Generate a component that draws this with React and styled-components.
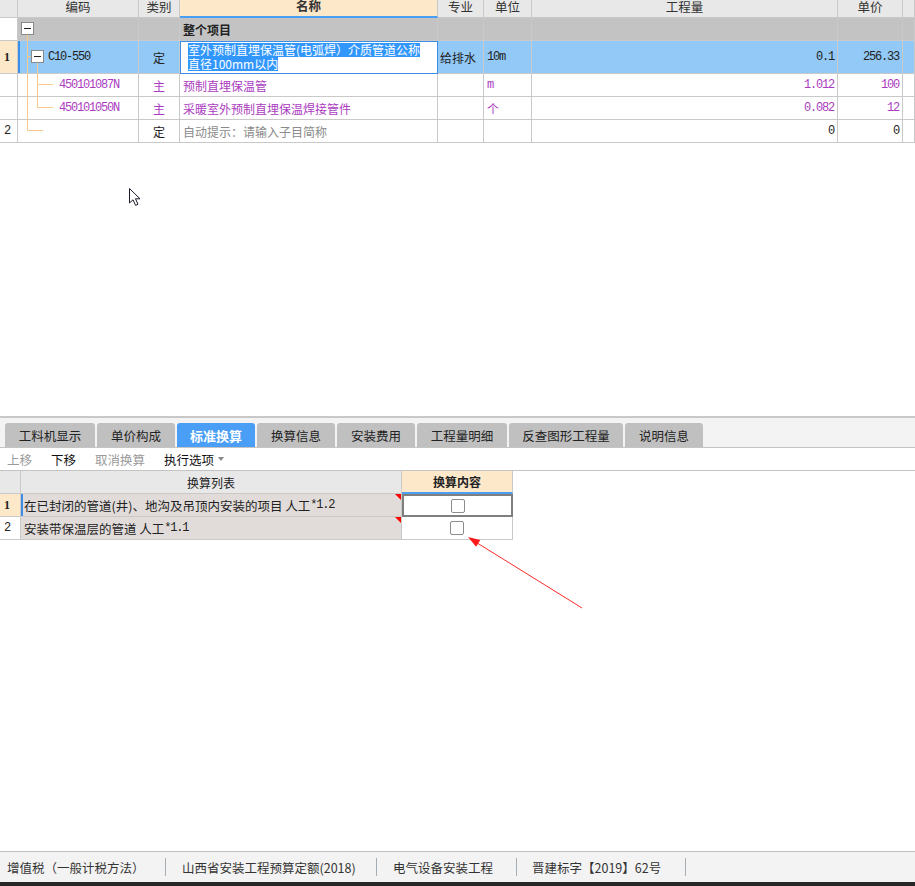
import React from "react";
import styled, { createGlobalStyle } from "styled-components";

const GlobalStyle = createGlobalStyle`
  html, body { margin: 0; padding: 0; background: #fff; }
  body {
    font-family: "Noto Sans CJK SC", "Noto Sans", sans-serif;
    font-size: 12px;
    color: #222;
    overflow: hidden;
  }
  * { box-sizing: border-box; }
`;

const LINE = "#c9c9c9";
const PEACH = "#fde8ca";
const SEL = "#92c9f7";
const GROUP = "#c3c3c3";
const HEAD = "#e8e8e8";
const PURPLE = "#ab3cc0";
const BLUE = "#3d8fe6";

const Page = styled.div`
  position: relative;
  width: 915px;
  height: 886px;
  display: flex;
  flex-direction: column;
  overflow: hidden;
`;

const TopPane = styled.div`
  position: relative;
  height: 416px;
  flex: none;
`;

const Row = styled.div`
  display: grid;
  grid-template-columns: ${(p) => p.$cols};
  height: ${(p) => p.$h}px;
`;

const Cell = styled.div`
  display: flex;
  align-items: center;
  justify-content: ${(p) =>
    p.$align === "right" ? "flex-end" : p.$align === "center" ? "center" : "flex-start"};
  padding: 0 ${(p) => p.$pr ?? 3}px 0 ${(p) => p.$pl ?? 3}px;
  border-right: 1px solid ${LINE};
  border-bottom: 1px solid ${LINE};
  background: ${(p) => p.$bg || "#fff"};
  color: ${(p) => p.$color || "#222"};
  font-weight: ${(p) => (p.$bold ? 700 : 400)};
  box-shadow: ${(p) => (p.$mark ? `inset 2px 0 0 ${BLUE}` : "none")};
  white-space: nowrap;
  overflow: hidden;
  position: relative;
`;

const HeadCell = styled(Cell)`
  justify-content: center;
  align-items: flex-end;
  padding-bottom: 4px;
  line-height: 12px;
  font-size: 12.5px;
  color: #333;
  background: ${(p) => (p.$active ? PEACH : HEAD)};
  border-bottom: ${(p) => (p.$active ? `2px solid #4a9ff5` : `1px solid ${LINE}`)};
`;

const NumCell = styled(Cell)`
  font-family: "Liberation Serif", serif;
  font-size: 12px;
  padding-left: 4px;
  background: ${(p) => (p.$current ? PEACH : "#fff")};
`;

const Mono = styled.span`
  font-family: "Liberation Mono", monospace;
  font-size: 12px;
  letter-spacing: -1.2px;
`;

const EditCell = styled.div`
  border: 1px solid ${BLUE};
  background: #fff;
  padding: 1px 0 0 7px;
  display: flex;
  flex-direction: column;
  align-items: flex-start;
  overflow: hidden;
`;

const Picked = styled.span`
  display: block;
  height: 14px;
  line-height: 14px;
  background: #3297fd;
  color: #fff;
  white-space: nowrap;
`;

const Overlay = styled.svg`
  position: absolute;
  left: ${(p) => p.$x}px;
  top: ${(p) => p.$y}px;
  pointer-events: none;
  overflow: visible;
`;

/* ---- bottom pane ---- */

const TabBar = styled.div`
  flex: none;
  height: 32px;
  border-top: 2px solid #c8c8c8;
  border-bottom: 1px solid #c4c4c4;
  background: #f3f3f3;
  display: flex;
  align-items: flex-end;
  gap: 2px;
  padding-left: 5px;
`;

const Tab = styled.div`
  width: ${(p) => p.$w}px;
  height: 24px;
  display: flex;
  align-items: center;
  justify-content: center;
  border-radius: 3px 3px 0 0;
  background: ${(p) => (p.$active ? "#4a9ef6" : "#c0c0c0")};
  color: ${(p) => (p.$active ? "#fff" : "#222")};
  font-size: ${(p) => (p.$active ? 13 : 12.5)}px;
  font-weight: ${(p) => (p.$active ? 700 : 400)};
`;

const Toolbar = styled.div`
  flex: none;
  height: 23px;
  border-bottom: 1px solid #c4c4c4;
  display: flex;
  align-items: center;
  gap: 19px;
  padding-left: 7px;
  font-size: 12.5px;
`;

const ToolItem = styled.span`
  color: ${(p) => (p.$off ? "#9a9a9a" : "#111")};
  display: inline-flex;
  align-items: center;
`;

const Caret = styled.span`
  width: 0;
  height: 0;
  margin-left: 4px;
  border-left: 3.5px solid transparent;
  border-right: 3.5px solid transparent;
  border-top: 4px solid #888;
`;

const ListCell = styled(Cell)`
  background: #e1dcd9;
  padding-left: 3px;
  font-size: 12.5px;
  &::after {
    content: "";
    position: absolute;
    top: 0;
    right: 0;
    border-top: 6px solid #f00;
    border-left: 6px solid transparent;
  }
`;

const CheckCell = styled(Cell)`
  justify-content: center;
  border: ${(p) => (p.$focus ? "2px solid #7f7f7f" : undefined)};
`;

const Check = styled.span`
  width: 14px;
  height: 14px;
  border: 1px solid #8c8c8c;
  border-radius: 2px;
  background: #fff;
`;

const Spacer = styled.div`
  flex: 1;
`;

const StatusBar = styled.div`
  flex: none;
  height: 35px;
  border-top: 1px solid #c0c0c0;
  border-bottom: 4px solid #272727;
  background: #f3f3f3;
  display: flex;
  align-items: center;
  font-size: 12.5px;
  color: #333;
`;

const StatusItem = styled.div`
  width: ${(p) => p.$w}px;
  padding-left: ${(p) => p.$pl}px;
  white-space: nowrap;
`;

const Sep = styled.span`
  width: 1px;
  height: 18px;
  background: #a4acb4;
`;

const TOP_COLS = "18px 121px 41px 258px 46px 48px 306px 65px 1fr";
const BOTTOM_COLS = "21px 381px 111px";

const children = [
  { code: "450101087N", name: "预制直埋保温管", unit: "m", qty: "1.012", price: "100" },
  { code: "450101050N", name: "采暖室外预制直埋保温焊接管件", unit: "个", qty: "0.082", price: "12", cjkUnit: true },
];

const tabs = [
  ["工料机显示", 90],
  ["单价构成", 78],
  ["标准换算", 78, true],
  ["换算信息", 78],
  ["安装费用", 78],
  ["工程量明细", 90],
  ["反查图形工程量", 114],
  ["说明信息", 78],
];

const TreeLines = () => (
  <Overlay $x={0} $y={0} width="140" height="142">
    <g stroke="#f8c98c" strokeWidth="1" fill="none">
      <line x1="27.5" y1="34" x2="27.5" y2="130.5" />
      <line x1="27" y1="130.5" x2="43" y2="130.5" />
      <line x1="27" y1="56.5" x2="31" y2="56.5" />
      <line x1="37.5" y1="63" x2="37.5" y2="107.5" />
      <line x1="37" y1="84.5" x2="53" y2="84.5" />
      <line x1="37" y1="107.5" x2="53" y2="107.5" />
    </g>
    <g stroke="#8a8a8a" fill="#fff">
      <rect x="21.5" y="22.5" width="12" height="12" />
      <rect x="31.5" y="50.5" width="12" height="12" />
    </g>
    <g stroke="#222" strokeWidth="1">
      <line x1="24" y1="28.5" x2="31" y2="28.5" />
      <line x1="34" y1="56.5" x2="41" y2="56.5" />
    </g>
  </Overlay>
);

const App = () => {
  return (
    <Page>
      <GlobalStyle />
      <TopPane>
        <Row $cols={TOP_COLS} $h={18}>
          <HeadCell />
          <HeadCell>编码</HeadCell>
          <HeadCell>类别</HeadCell>
          <HeadCell $active $bold>名称</HeadCell>
          <HeadCell>专业</HeadCell>
          <HeadCell>单位</HeadCell>
          <HeadCell>工程量</HeadCell>
          <HeadCell>单价</HeadCell>
          <HeadCell />
        </Row>

        <Row $cols={TOP_COLS} $h={23}>
          <NumCell />
          <Cell $bg={GROUP} />
          <Cell $bg={GROUP} />
          <Cell $bg={GROUP} $bold>整个项目</Cell>
          <Cell $bg={GROUP} />
          <Cell $bg={GROUP} />
          <Cell $bg={GROUP} />
          <Cell $bg={GROUP} />
          <Cell $bg={GROUP} />
        </Row>

        <Row $cols={TOP_COLS} $h={33}>
          <NumCell $current $bold>1</NumCell>
          <Cell $bg={SEL} $mark $pl={30}>
            <Mono>C10-550</Mono>
          </Cell>
          <Cell $bg={SEL} $align="center">定</Cell>
          <EditCell>
            <Picked>室外预制直埋保温管(电弧焊）介质管道公称</Picked>
            <Picked>直径100mm以内</Picked>
          </EditCell>
          <Cell $bg={SEL} $pl={2}>给排水</Cell>
          <Cell $bg={SEL}>
            <Mono>10m</Mono>
          </Cell>
          <Cell $bg={SEL} $align="right">
            <Mono>0.1</Mono>
          </Cell>
          <Cell $bg={SEL} $align="right">
            <Mono>256.33</Mono>
          </Cell>
          <Cell $bg={SEL} />
        </Row>

        {children.map((c) => (
          <Row key={c.code} $cols={TOP_COLS} $h={23}>
            <NumCell />
            <Cell $pl={41} $color={PURPLE}>
              <Mono>{c.code}</Mono>
            </Cell>
            <Cell $align="center" $color={PURPLE}>主</Cell>
            <Cell $color={PURPLE}>{c.name}</Cell>
            <Cell />
            <Cell $color={PURPLE}>{c.cjkUnit ? c.unit : <Mono>{c.unit}</Mono>}</Cell>
            <Cell $align="right" $color={PURPLE}>
              <Mono>{c.qty}</Mono>
            </Cell>
            <Cell $align="right" $color={PURPLE}>
              <Mono>{c.price}</Mono>
            </Cell>
            <Cell />
          </Row>
        ))}

        <Row $cols={TOP_COLS} $h={23}>
          <NumCell>
            <Mono>2</Mono>
          </NumCell>
          <Cell />
          <Cell $align="center">定</Cell>
          <Cell $color="#8a8a8a">自动提示：请输入子目简称</Cell>
          <Cell />
          <Cell />
          <Cell $align="right">
            <Mono>0</Mono>
          </Cell>
          <Cell $align="right">
            <Mono>0</Mono>
          </Cell>
          <Cell />
        </Row>

        <TreeLines />

        {/* mouse pointer */}
        <Overlay $x={128} $y={187} width="14" height="20">
          <path
            d="M1.5 1.5 L1.5 16 L5 12.8 L7.6 18.4 L10 17.3 L7.5 11.8 L12 11.8 Z"
            fill="#fff"
            stroke="#1a1a2a"
            strokeWidth="1"
            strokeLinejoin="round"
          />
        </Overlay>
      </TopPane>

      <TabBar>
        {tabs.map(([label, w, active]) => (
          <Tab key={label} $w={w} $active={active}>
            {label}
          </Tab>
        ))}
      </TabBar>

      <Toolbar>
        <ToolItem $off>上移</ToolItem>
        <ToolItem>下移</ToolItem>
        <ToolItem $off>取消换算</ToolItem>
        <ToolItem>
          执行选项
          <Caret />
        </ToolItem>
      </Toolbar>

      <div>
        <Row $cols={BOTTOM_COLS} $h={23}>
          <Cell $bg={HEAD} />
          <Cell $bg={HEAD} $align="center">换算列表</Cell>
          <Cell $bg={PEACH} $align="center" $bold style={{ borderBottom: "2px solid #4a9ff5" }}>
            换算内容
          </Cell>
        </Row>
        <Row $cols={BOTTOM_COLS} $h={23}>
          <NumCell $current $bold>1</NumCell>
          <ListCell $mark>
            在已封闭的管道(井)、地沟及吊顶内安装的项目 人工<Mono>*1.2</Mono>
          </ListCell>
          <CheckCell $focus>
            <Check />
          </CheckCell>
        </Row>
        <Row $cols={BOTTOM_COLS} $h={23}>
          <NumCell>
            <Mono>2</Mono>
          </NumCell>
          <ListCell>
            安装带保温层的管道 人工<Mono>*1.1</Mono>
          </ListCell>
          <CheckCell>
            <Check />
          </CheckCell>
        </Row>
      </div>

      <Spacer />

      <StatusBar>
        <StatusItem $w={165} $pl={7}>增值税（一般计税方法）</StatusItem>
        <Sep />
        <StatusItem $w={210} $pl={16}>山西省安装工程预算定额(2018)</StatusItem>
        <Sep />
        <StatusItem $w={139} $pl={16}>电气设备安装工程</StatusItem>
        <Sep />
        <StatusItem $w={168} $pl={15}>晋建标字【2019】62号</StatusItem>
        <Sep />
      </StatusBar>

      {/* red annotation arrow */}
      <Overlay $x={460} $y={530} width="130" height="85">
        <line x1="122" y1="78" x2="14" y2="11" stroke="#ff2a2a" strokeWidth="1" />
        <polygon points="8,7 16.1,16.7 20.3,9.9" fill="#ff1a1a" />
      </Overlay>
    </Page>
  );
};

export default App;
